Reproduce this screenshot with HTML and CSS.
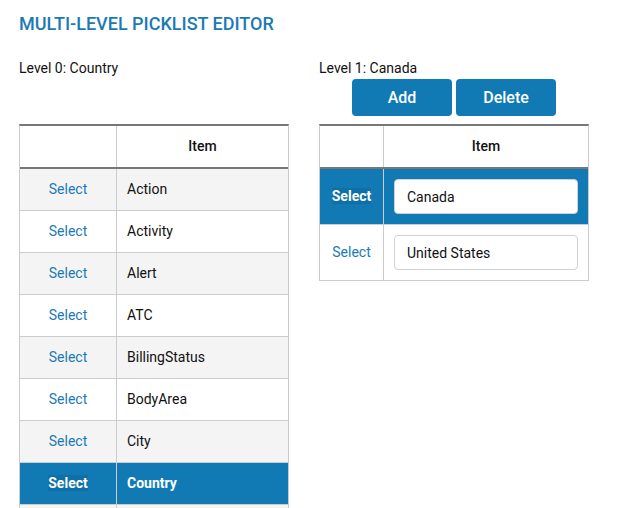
FILE: index.html
```html
<!DOCTYPE html>
<html>
<head>
<meta charset="utf-8">
<link rel="stylesheet" href="styles.css">
</head>
<body>
<div class="page">
  <h1 class="title">MULTI-LEVEL PICKLIST EDITOR</h1>
  <div class="levels">
    <div class="label">Level 0: Country</div>
    <div class="label">Level 1: Canada</div>
    <div class="actions-spacer"></div>
    <div class="actions">
      <button class="btn">Add</button>
      <button class="btn">Delete</button>
    </div>
    <div class="grid grid-left">
      <div class="row head"><div class="c1"></div><div class="c2">Item</div></div>
      <div class="row alt"><div class="c1"><a class="sel">Select</a></div><div class="c2">Action</div></div>
      <div class="row"><div class="c1"><a class="sel">Select</a></div><div class="c2">Activity</div></div>
      <div class="row alt"><div class="c1"><a class="sel">Select</a></div><div class="c2">Alert</div></div>
      <div class="row"><div class="c1"><a class="sel">Select</a></div><div class="c2">ATC</div></div>
      <div class="row alt"><div class="c1"><a class="sel">Select</a></div><div class="c2">BillingStatus</div></div>
      <div class="row"><div class="c1"><a class="sel">Select</a></div><div class="c2">BodyArea</div></div>
      <div class="row alt"><div class="c1"><a class="sel">Select</a></div><div class="c2">City</div></div>
      <div class="row active"><div class="c1"><a class="sel">Select</a></div><div class="c2">Country</div></div>
      <div class="row alt"><div class="c1"></div><div class="c2"></div></div>
    </div>
    <div class="grid grid-right">
      <div class="row head"><div class="c1"></div><div class="c2">Item</div></div>
      <div class="row tall active"><div class="c1"><a class="sel">Select</a></div><div class="c2 inp-cell"><input class="inp" type="text" value="Canada"></div></div>
      <div class="row tall"><div class="c1"><a class="sel">Select</a></div><div class="c2 inp-cell"><input class="inp" type="text" value="United States"></div></div>
    </div>
  </div>
</div>
</body>
</html>
```

FILE: styles.css
```css
html, body {
  margin: 0;
  padding: 0;
  background: #fff;
}
body {
  font-family: Roboto, "Liberation Sans", sans-serif;
  color: #111;
  font-size: 14px;
}
.page {
  padding: 12px 19px 0 19px;
}
.title {
  margin: 0;
  font-size: 18px;
  font-weight: 500;
  line-height: 24px;
  color: #1a7ab4;
  letter-spacing: 0;
}
.levels {
  display: grid;
  grid-template-columns: 270px 270px;
  column-gap: 30px;
  margin-top: 23px;
}
.label {
  font-size: 14px;
  line-height: 18px;
  color: #111;
}
.actions {
  display: flex;
  justify-content: center;
  gap: 4px;
  margin-top: 2px;
}
.btn {
  width: 100px;
  height: 37px;
  border: none;
  border-radius: 4px;
  background: #117ab5;
  color: #fff;
  font-family: Roboto, "Liberation Sans", sans-serif;
  font-size: 16px;
  font-weight: 500;
  padding: 0;
}
.grid {
  margin-top: 8px;
  border-top: 2px solid #777;
  border-left: 1px solid #ccc;
  border-right: 1px solid #ccc;
  align-self: start;
}
.row {
  display: grid;
  height: 42px;
  box-sizing: border-box;
  border-bottom: 1px solid #ccc;
  background: #fff;
}
.grid-left .row { grid-template-columns: 97px 1fr; }
.grid-right .row { grid-template-columns: 64px 1fr; }
.row.alt { background: #f4f4f4; }
.row.head {
  height: 43px;
  border-bottom: 2px solid #777;
}
.row.tall { height: 56px; }
.c1 {
  border-right: 1px solid #ccc;
  display: flex;
  align-items: center;
  justify-content: center;
  padding-bottom: 2px;
}
.c2 {
  display: flex;
  align-items: center;
  padding-left: 10px;
  padding-bottom: 2px;
}
.head .c2 {
  justify-content: center;
  padding-left: 0;
  font-weight: 500;
}
.sel {
  color: #1a7ab4;
  font-size: 14px;
  cursor: pointer;
}
.row.active {
  background: #117ab5;
  color: #fff;
  font-weight: 700;
}
.row.active .sel {
  color: #fff;
  font-weight: 700;
  background: #0f70a8;
}
.inp-cell {
  padding: 0 10px;
}
.grid-right .c2.inp-cell { padding-bottom: 0; }
.inp {
  width: 100%;
  height: 35px;
  box-sizing: border-box;
  border: 1px solid #cdd2d6;
  border-radius: 4px;
  padding: 0 12px;
  font-family: Roboto, "Liberation Sans", sans-serif;
  font-size: 14px;
  color: #111;
  background: #fff;
  outline: none;
}
```
